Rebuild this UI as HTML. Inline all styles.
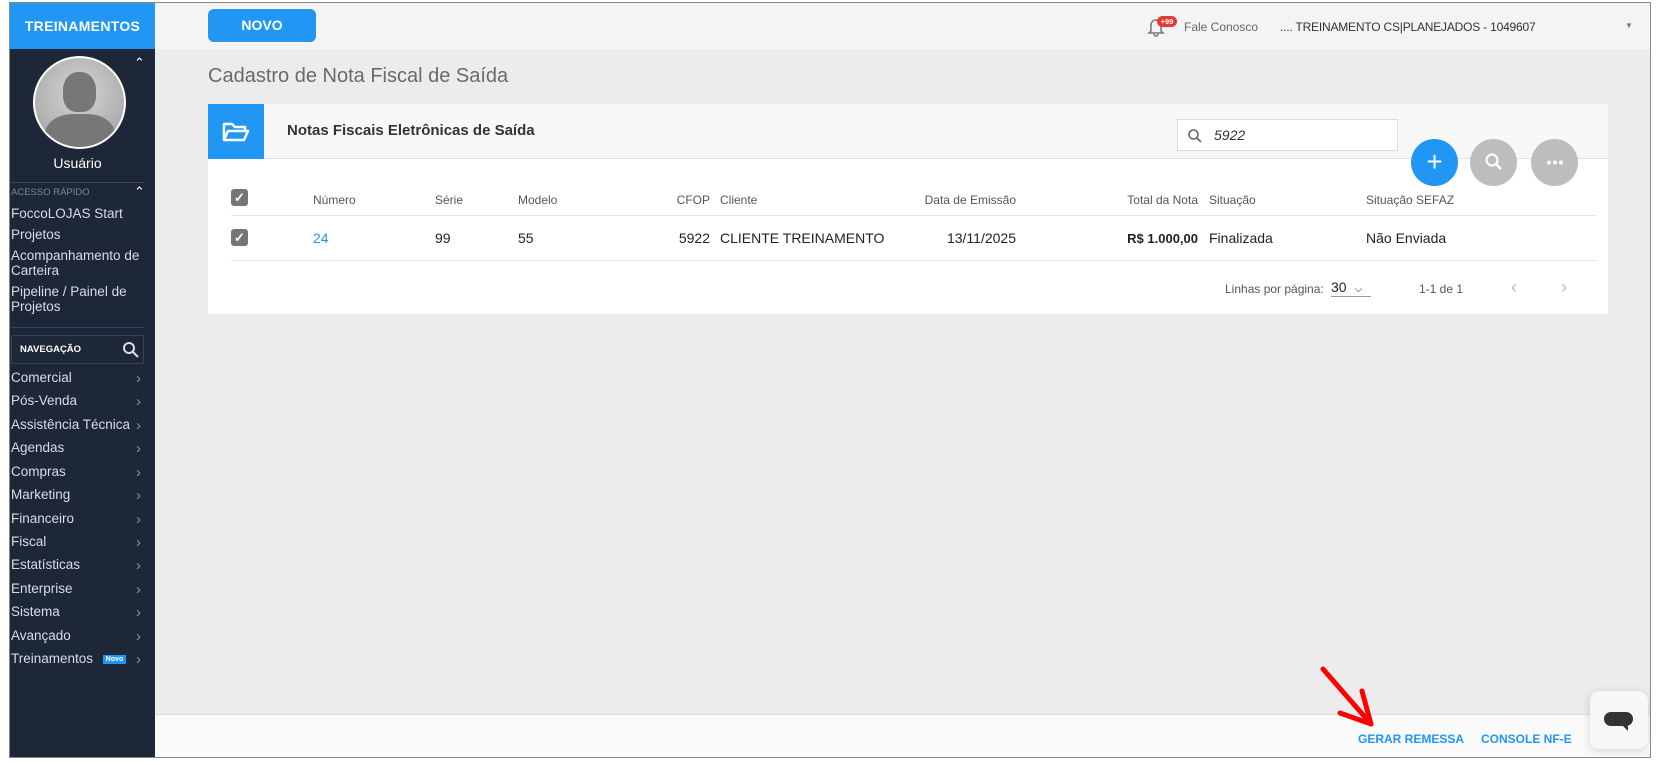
<!DOCTYPE html>
<html><head><meta charset="utf-8">
<style>
*{box-sizing:border-box;margin:0;padding:0}
body{width:1659px;height:765px;background:#fff;font-family:"Liberation Sans",sans-serif;position:relative;overflow:hidden}
.frame{position:absolute;left:9px;top:2px;width:1642px;height:756px;border:1px solid #888;background:#ececec;overflow:hidden}
.abs{position:absolute}
.side{left:0;top:0;width:145px;height:756px;background:#1e2738}
.sidehead{left:0;top:0;width:145px;height:46px;background:#2196f3;color:#fff;font-weight:bold;font-size:14px;line-height:46px;text-align:center;letter-spacing:.3px}
.si{position:absolute;left:1px;color:#d8dce3;font-size:13.5px;white-space:nowrap}
.nv{position:absolute;left:1px;width:130px;color:#d8dce3;font-size:13.5px}
.nv:after{content:"›";position:absolute;right:0;color:#8a93a3;font-size:15px}
.top{left:145px;top:0;width:1497px;height:46px;background:#f4f4f4}
.th{position:absolute;top:190px;font-size:12px;color:#555}
.td{position:absolute;top:227px;font-size:14px;color:#222}
.cb{position:absolute;left:221px;width:17px;height:17px;background:#757575;border-radius:3px;color:#fff;font-size:13px;line-height:17px;text-align:center;font-weight:bold}
.fab{position:absolute;top:136px;width:47px;height:47px;border-radius:50%;background:#bdbdbd}
</style></head><body>
<div class="frame">
  <div class="abs side">
    <div class="abs sidehead">TREINAMENTOS</div>
    <div class="abs" style="left:124px;top:52px;color:#fff;font-size:13px">&#8963;</div>
    <div class="abs" style="left:23px;top:53px;width:93px;height:93px;border-radius:50%;border:2px solid #fff;background:radial-gradient(circle at 50% 40%,#d6d6d6,#9c9c9c);overflow:hidden">
      <div class="abs" style="left:28px;top:14px;width:33px;height:40px;border-radius:45% 45% 40% 40%;background:#777"></div>
      <div class="abs" style="left:10px;top:56px;width:70px;height:50px;border-radius:40% 40% 0 0;background:#777"></div>
    </div>
    <div class="abs" style="left:0;width:135px;top:152px;text-align:center;color:#fff;font-size:14px">Usuário</div>
    <div class="abs" style="left:1px;top:179px;width:134px;border-top:1px solid #3a4456"></div>
    <div class="si" style="top:184px;font-size:9.5px;color:#7c8596">ACESSO RÁPIDO</div>
    <div class="abs" style="left:124px;top:181px;color:#fff;font-size:13px">&#8963;</div>
    <div class="si" style="top:203px">FoccoLOJAS Start</div>
    <div class="si" style="top:224px">Projetos</div>
    <div class="si" style="top:245px;line-height:15px">Acompanhamento de<br>Carteira</div>
    <div class="si" style="top:281px;line-height:15px">Pipeline / Painel de<br>Projetos</div>
    <div class="abs" style="left:1px;top:324px;width:134px;border-top:1px solid #3a4456"></div>
    <div class="abs" style="left:1px;top:332px;width:133px;height:29px;border:1px solid #3a4456;border-radius:2px">
      <span class="abs" style="left:8px;top:8px;color:#fff;font-size:9.5px;font-weight:bold">NAVEGAÇÃO</span>
      <svg class="abs" style="left:110px;top:5px" width="18" height="18" viewBox="0 0 18 18"><circle cx="7" cy="7" r="5" fill="none" stroke="#ddd" stroke-width="2"/><path d="M11 11l5 5" stroke="#ddd" stroke-width="2"/></svg>
    </div>
    <div class="nv" style="top:367px">Comercial</div>
    <div class="nv" style="top:390px">Pós-Venda</div>
    <div class="nv" style="top:414px">Assistência Técnica</div>
    <div class="nv" style="top:437px">Agendas</div>
    <div class="nv" style="top:461px">Compras</div>
    <div class="nv" style="top:484px">Marketing</div>
    <div class="nv" style="top:508px">Financeiro</div>
    <div class="nv" style="top:531px">Fiscal</div>
    <div class="nv" style="top:554px">Estatísticas</div>
    <div class="nv" style="top:578px">Enterprise</div>
    <div class="nv" style="top:601px">Sistema</div>
    <div class="nv" style="top:625px">Avançado</div>
    <div class="nv" style="top:648px">Treinamentos <span style="display:inline-block;background:#2196f3;color:#fff;font-size:7px;font-weight:bold;padding:1px 3px;margin-left:6px;vertical-align:2px">Novo</span></div>
  </div>

  <div class="abs top">
    <div class="abs" style="left:53px;top:6px;width:108px;height:33px;background:#2196f3;border-radius:6px;color:#fff;font-weight:bold;font-size:14px;line-height:33px;text-align:center">NOVO</div>
    <svg class="abs" style="left:992px;top:14px" width="18" height="20" viewBox="0 0 18 20"><path d="M4 14V8a5 5 0 0 1 10 0v6l2 2H2z M7 17a2 2 0 0 0 4 0" fill="none" stroke="#777" stroke-width="1.5"/></svg>
    <div class="abs" style="left:1002px;top:13px;width:20px;height:11px;background:#e53935;border-radius:6px;color:#fff;font-size:7.5px;font-weight:bold;line-height:11px;text-align:center">+99</div>
    <div class="abs" style="left:1029px;top:17px;font-size:12px;color:#666">Fale Conosco</div>
    <div class="abs" style="left:1125px;top:17px;font-size:12px;color:#333;letter-spacing:-.2px">.... TREINAMENTO CS|PLANEJADOS - 1049607</div>
    <div class="abs" style="left:1470px;top:18px;font-size:8px;color:#777">▼</div>
  </div>

  <div class="abs" style="left:198px;top:62px;font-size:20px;color:#6a6a6a">Cadastro de Nota Fiscal de Saída</div>

  <div class="abs" style="left:198px;top:101px;width:1400px;height:210px;background:#fff">
    <div class="abs" style="left:0;top:0;width:1400px;height:55px;background:#f8f8f8;border-bottom:1px solid #e2e2e2"></div>
    <div class="abs" style="left:0;top:0;width:56px;height:55px;background:#2196f3">
      <svg class="abs" style="left:13px;top:16px" width="30" height="24" viewBox="0 0 30 24"><path d="M3 20V4h8l3 3h10v4" fill="none" stroke="#fff" stroke-width="2.5" stroke-linejoin="round"/><path d="M3 20l4-9h20l-4 9z" fill="none" stroke="#fff" stroke-width="2.5" stroke-linejoin="round"/></svg>
    </div>
    <div class="abs" style="left:79px;top:18px;font-size:15px;font-weight:bold;color:#333">Notas Fiscais Eletrônicas de Saída</div>
    <div class="abs" style="left:969px;top:15px;width:221px;height:32px;border:1px solid #ddd;background:#fff">
      <svg class="abs" style="left:9px;top:8px" width="16" height="16" viewBox="0 0 16 16"><circle cx="6.5" cy="6.5" r="4.5" fill="none" stroke="#666" stroke-width="1.6"/><path d="M10 10l4 4" stroke="#666" stroke-width="1.8"/></svg>
      <span class="abs" style="left:36px;top:7px;font-size:14px;color:#333;font-style:italic">5922</span>
    </div>
  </div>

  <div class="fab" style="left:1401px;background:#2196f3;color:#fff;font-size:28px;text-align:center;line-height:45px">+</div>
  <div class="fab" style="left:1460px"><svg class="abs" style="left:14px;top:13px" width="20" height="20" viewBox="0 0 20 20"><circle cx="8" cy="8" r="5.5" fill="none" stroke="#fff" stroke-width="2.2"/><path d="M12 12l5 5" stroke="#fff" stroke-width="2.6"/></svg></div>
  <div class="fab" style="left:1521px"><svg class="abs" style="left:14px;top:21px" width="20" height="5" viewBox="0 0 20 5"><circle cx="4" cy="2.5" r="2" fill="#fff"/><circle cx="10" cy="2.5" r="2" fill="#fff"/><circle cx="16" cy="2.5" r="2" fill="#fff"/></svg></div>

  <div class="cb" style="top:186px">✓</div>
  <div class="cb" style="top:226px">✓</div>
  <div class="abs" style="left:221px;top:212px;width:1365px;border-top:1px solid #e2e2e2"></div>
  <div class="abs" style="left:221px;top:257px;width:1365px;border-top:1px solid #e2e2e2"></div>
  <div class="th" style="left:303px">Número</div>
  <div class="th" style="left:425px">Série</div>
  <div class="th" style="left:508px">Modelo</div>
  <div class="th" style="left:660px;width:40px;text-align:right">CFOP</div>
  <div class="th" style="left:710px">Cliente</div>
  <div class="th" style="left:880px;width:126px;text-align:right">Data de Emissão</div>
  <div class="th" style="left:1080px;width:108px;text-align:right">Total da Nota</div>
  <div class="th" style="left:1199px">Situação</div>
  <div class="th" style="left:1356px">Situação SEFAZ</div>
  <div class="td" style="left:303px;color:#2196f3">24</div>
  <div class="td" style="left:425px">99</div>
  <div class="td" style="left:508px">55</div>
  <div class="td" style="left:640px;width:60px;text-align:right">5922</div>
  <div class="td" style="left:710px">CLIENTE TREINAMENTO</div>
  <div class="td" style="left:880px;width:126px;text-align:right">13/11/2025</div>
  <div class="td" style="left:1060px;width:128px;text-align:right;font-weight:bold;font-size:13px;top:228px">R$ 1.000,00</div>
  <div class="td" style="left:1199px">Finalizada</div>
  <div class="td" style="left:1356px">Não Enviada</div>

  <div class="abs" style="left:1215px;top:279px;font-size:12px;color:#555">Linhas por página:</div>
  <div class="abs" style="left:1321px;top:276px;width:40px;height:18px;border-bottom:1px solid #999;font-size:14px;color:#222">30 <span style="font-size:10px;margin-left:4px">&#9013;</span></div>
  <div class="abs" style="left:1409px;top:279px;font-size:12px;color:#555">1-1 de 1</div>
  <div class="abs" style="left:1501px;top:274px;font-size:18px;color:#bbb">‹</div>
  <div class="abs" style="left:1551px;top:274px;font-size:18px;color:#bbb">›</div>

  <div class="abs" style="left:145px;top:711px;width:1497px;height:45px;background:#fafafa;border-top:1px solid #ddd"></div>
  <div class="abs" style="left:1348px;top:729px;font-size:12px;font-weight:bold;color:#2196f3">GERAR REMESSA</div>
  <div class="abs" style="left:1471px;top:729px;font-size:12px;font-weight:bold;color:#2196f3">CONSOLE NF-E</div>
  <div class="abs" style="left:1580px;top:688px;width:58px;height:58px;background:#f7f7f7;border-radius:10px;box-shadow:0 2px 10px rgba(0,0,0,.15)">
    <div class="abs" style="left:14px;top:21px;width:29px;height:14px;background:#333;border-radius:7px"></div>
    <div class="abs" style="left:33px;top:35px;width:0;height:0;border-left:5px solid transparent;border-top:5px solid #333"></div>
  </div>
  <svg class="abs" style="left:1300px;top:660px" width="80" height="80" viewBox="0 0 80 80"><path d="M13 6L61 61" stroke="#f00" stroke-width="5" stroke-linecap="round"/><path d="M30 50L61 61L52 28" fill="none" stroke="#f00" stroke-width="5" stroke-linecap="round" stroke-linejoin="round"/></svg>
</div>
</body></html>
